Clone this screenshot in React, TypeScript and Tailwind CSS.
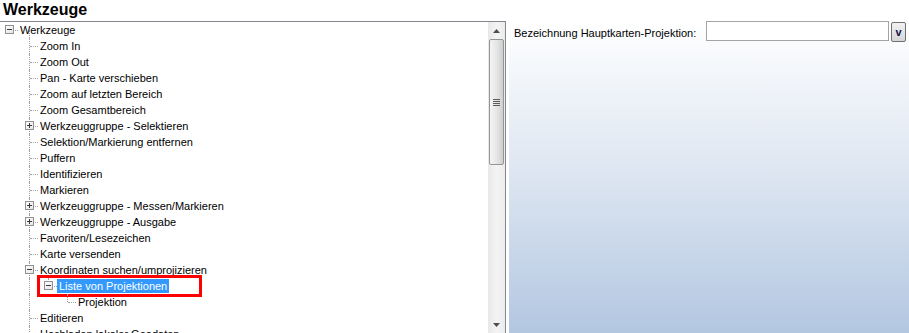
import React from 'react'

type Node = {
  label: string
  level: number
  box?: 'plus' | 'minus'
  selected?: boolean
  lastChild?: boolean
}

const nodes: Node[] = [
  { label: 'Werkzeuge', level: 0, box: 'minus' },
  { label: 'Zoom In', level: 1 },
  { label: 'Zoom Out', level: 1 },
  { label: 'Pan - Karte verschieben', level: 1 },
  { label: 'Zoom auf letzten Bereich', level: 1 },
  { label: 'Zoom Gesamtbereich', level: 1 },
  { label: 'Werkzeuggruppe - Selektieren', level: 1, box: 'plus' },
  { label: 'Selektion/Markierung entfernen', level: 1 },
  { label: 'Puffern', level: 1 },
  { label: 'Identifizieren', level: 1 },
  { label: 'Markieren', level: 1 },
  { label: 'Werkzeuggruppe - Messen/Markieren', level: 1, box: 'plus' },
  { label: 'Werkzeuggruppe - Ausgabe', level: 1, box: 'plus' },
  { label: 'Favoriten/Lesezeichen', level: 1 },
  { label: 'Karte versenden', level: 1 },
  { label: 'Koordinaten suchen/umprojizieren', level: 1, box: 'minus' },
  { label: 'Liste von Projektionen', level: 2, box: 'minus', selected: true, lastChild: true },
  { label: 'Projektion', level: 3, lastChild: true },
  { label: 'Editieren', level: 1 },
  { label: 'Hochladen lokaler Geodaten', level: 1 },
]

// connector centre and label start per level
const centers = [9, 29, 48, 67]
const lefts = [18, 38, 57, 76]

function Expander({ kind }: { kind: 'plus' | 'minus' }) {
  return (
    <span className="relative block w-[9px] h-[9px] border border-[#919191] bg-gradient-to-br from-white to-[#e4e4e4]">
      <span className="absolute left-[1px] top-[3px] w-[5px] h-[1px] bg-[#3b3b3b]" />
      {kind === 'plus' && <span className="absolute left-[3px] top-[1px] w-[1px] h-[5px] bg-[#3b3b3b]" />}
    </span>
  )
}

function TreeRow({ node }: { node: Node }) {
  const c = centers[node.level]
  const left = lefts[node.level]
  return (
    <div className="relative h-[16px] flex items-center">
      {/* guide of the root's children, continues past deeper rows */}
      {node.level >= 2 && (
        <span className="absolute top-0 bottom-0 border-l border-dotted border-[#a0a0a0]" style={{ left: centers[1] }} />
      )}
      {node.level >= 1 && (
        <span
          className={`absolute top-0 border-l border-dotted border-[#a0a0a0] ${node.lastChild ? 'h-[8px]' : 'bottom-0'}`}
          style={{ left: c }}
        />
      )}
      {node.level === 0 && (
        <span className="absolute top-[8px] bottom-0 border-l border-dotted border-[#a0a0a0]" style={{ left: centers[1] }} />
      )}
      <span
        className="absolute top-[8px] border-t border-dotted border-[#a0a0a0]"
        style={{ left: c + 1, width: left - c - 1 }}
      />
      {node.box && (
        <span className="absolute top-[3px]" style={{ left: c - 4 }}>
          <Expander kind={node.box} />
        </span>
      )}
      <span
        className={`absolute top-[1px] h-[14px] leading-[14px] px-[2px] whitespace-nowrap ${
          node.selected ? 'bg-[#3399ff] text-white' : 'text-black'
        }`}
        style={{ left }}
      >
        {node.label}
      </span>
      {node.selected && (
        <span className="absolute left-[37px] top-[-3px] w-[165px] h-[22px] border-[3px] border-[#ff0000]" />
      )}
    </div>
  )
}

function Arrow({ up }: { up?: boolean }) {
  return (
    <svg width="7" height="4" viewBox="0 0 7 4">
      {up ? <path d="M0 4 L3.5 0 L7 4 Z" fill="#4d4d4d" /> : <path d="M0 0 L3.5 4 L7 0 Z" fill="#4d4d4d" />}
    </svg>
  )
}

function ScrollBar() {
  return (
    <div className="w-[17px] flex flex-col bg-gradient-to-r from-[#e8e8e8] via-[#f4f4f4] to-[#ececec]">
      <div className="h-[17px] flex items-center justify-center">
        <Arrow up />
      </div>
      <div className="h-[126px] mx-[1px] rounded-[2px] border border-[#959595] bg-gradient-to-r from-[#f4f4f4] via-[#e6e6e6] to-[#cfcfcf] flex items-center justify-center">
        <div className="flex flex-col gap-[1px]">
          <span className="block w-[7px] h-[1px] bg-[#5a5a5a]" />
          <span className="block w-[7px] h-[1px] bg-[#5a5a5a]" />
          <span className="block w-[7px] h-[1px] bg-[#5a5a5a]" />
          <span className="block w-[7px] h-[1px] bg-[#5a5a5a]" />
        </div>
      </div>
      <div className="flex-1" />
      <div className="h-[17px] flex items-center justify-center">
        <Arrow />
      </div>
    </div>
  )
}

export default function App() {
  return (
    <div className="w-[909px] h-[333px] bg-white overflow-hidden flex flex-col font-['Liberation_Sans',Arial,sans-serif] text-[11px]">
      <div className="h-[21px] pl-[3px] text-[16px] font-bold leading-[20px] text-black">Werkzeuge</div>
      <div className="flex-1 flex min-h-0">
        <div className="w-[506px] flex border-t border-r border-[#828790] overflow-hidden">
          <div className="flex-1 bg-white overflow-hidden">
            {nodes.map((n, i) => (
              <TreeRow key={i} node={n} />
            ))}
          </div>
          <ScrollBar />
        </div>
        <div className="ml-[3px] flex-1 bg-gradient-to-b from-white via-[#dce5f1] to-[#b3c7e1] pl-[5px] pr-[3px]">
          <div className="flex items-start">
            <span className="mt-[6px] leading-[13px] whitespace-nowrap text-black">
              Bezeichnung Hauptkarten-Projektion:
            </span>
            <div className="ml-auto flex items-start gap-[2px]">
              <div className="w-[183px] h-[20px] border border-[#a4a4a4] bg-white" />
              <div className="mt-[1px] w-[15px] h-[20px] rounded-[2px] border border-[#707070] bg-gradient-to-b from-[#f2f2f2] to-[#d6d6d6] flex items-center justify-center text-[11px] font-bold text-[#101050] leading-none">
                v
              </div>
            </div>
          </div>
        </div>
      </div>
    </div>
  )
}
